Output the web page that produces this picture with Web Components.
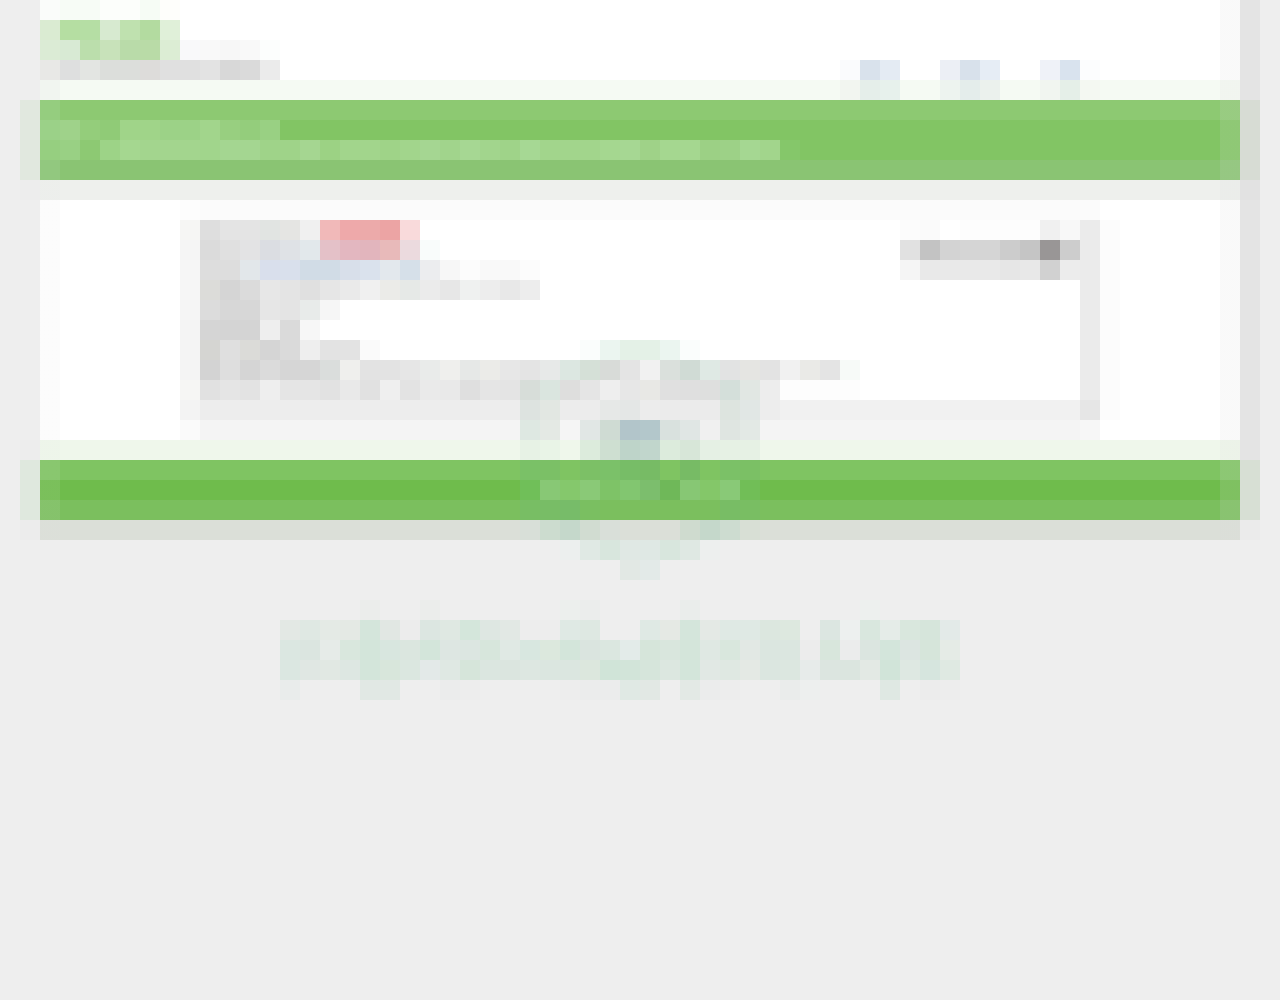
<!DOCTYPE html>
<html lang="en">
<head>
<meta charset="UTF-8">
<meta name="viewport" content="width=device-width, initial-scale=1.0">
<title>Mosaic page</title>
<style>
    body {
        margin: 0;
        background: #eeeeee;
        font-family: "Liberation Sans", sans-serif;
    }
</style>
</head>
<body>
<mosaic-page></mosaic-page>

<script>
/**
 * Draws a small grid of square tiles.
 * Rows are split by "|", tiles by spaces, "." is an empty tile, "3*aabbcc" repeats.
 */
class TileArt extends HTMLElement {
    constructor() {
        super();
        this.attachShadow({ mode: 'open' });
    }

    connectedCallback() {
        const rows = this.getAttribute('tiles').split('|').map((row) => {
            return row.trim().split(/\s+/).flatMap((tile) => {
                const [count, color] = tile.includes('*') ? tile.split('*') : [1, tile];
                return Array(Number(count)).fill(color);
            });
        });
        const cols = Number(this.getAttribute('cols')) || Math.max(...rows.map((r) => r.length));
        let rects = '';
        rows.forEach((row, y) => row.forEach((color, x) => {
            if (color && color !== '.') {
                rects += `<rect x="${x}" y="${y}" width="1" height="1" fill="#${color}" />`;
            }
        }));

        this.shadowRoot.innerHTML = `
        <style>
            :host { display: block; flex: none; }
            svg { display: block; shape-rendering: crispEdges; }
        </style>
        <svg width="${cols * 20}" height="${rows.length * 20}" viewBox="0 0 ${cols} ${rows.length}" aria-hidden="true">${rects}</svg>
        `;
    }
}

/**
 * Full-width band with a soft edge on both sides.
 */
class PageBand extends HTMLElement {
    constructor() {
        super();
        this.attachShadow({ mode: 'open' });
        this.shadowRoot.innerHTML = `
        <style>
            :host {
                display: grid;
                grid-template-columns: 20px minmax(0, 1fr) 20px;
                min-height: 20px;
            }
            .left { background: var(--left, #eeeeee); }
            .body {
                background:
                    linear-gradient(rgba(225, 225, 225, 0.1), rgba(225, 225, 225, 0.1)) left / 20px 100% no-repeat,
                    linear-gradient(rgba(218, 218, 218, 0.15), rgba(218, 218, 218, 0.15)) right / 20px 100% no-repeat,
                    var(--fill, linear-gradient(#ffffff, #ffffff));
            }
            .right { background: var(--right, #e4e4e4); }
        </style>
        <div class="left"></div>
        <div class="body"><slot></slot></div>
        <div class="right"></div>
        `;
    }
}

class SiteHeader extends HTMLElement {
    constructor() {
        super();
        this.attachShadow({ mode: 'open' });
        this.shadowRoot.innerHTML = `
        <style>
            :host { display: block; }
            page-band { --fill: linear-gradient(#ffffff 80px, #f5faf3 80px); }
            .row {
                display: flex;
                justify-content: space-between;
                align-items: flex-end;
                padding-right: 140px;
            }
            nav { display: flex; gap: 40px; }
            a { display: block; }
        </style>
        <page-band>
            <header class="row">
                <tile-art tiles="fafcfa 2*f7fcf6 2*fcfefb f6fcf5 fefefb |
                    daebd2 b5dea2 b5dea4 d7ead0 bfe1af b3dba0 e0f0d9 |
                    dbebd5 d8ead4 bbdeac c8e2ba b9dba9 b9dba7 dcedd4 f9f9fa f9f9f9 f7f7f7 f9f9f9 fcfefd |
                    e8e8e6 dedfdf e3e5e2 2*dcdedb dddcda 2*e0e0e0 e3e3e3 d8d8d8 dadada ebebeb |
                    f1f5f0"></tile-art>
                <nav>
                    <a href="#first" aria-label="First"><tile-art tiles="fafbfd d9e2ec e4ebf3 | f2f5f0 e5eeea e7f1ec"></tile-art></a>
                    <a href="#second" aria-label="Second"><tile-art tiles="eceff5 d8e1eb e6edf5 | edf3ef e4edeb ebf1ed"></tile-art></a>
                    <a href="#third" aria-label="Third"><tile-art tiles="eff2f8 d9e3ee fcfdfe | f1f5f0 e5efe8 f4f8f2"></tile-art></a>
                </nav>
            </header>
        </page-band>
        `;
    }
}

class TitleBanner extends HTMLElement {
    constructor() {
        super();
        this.attachShadow({ mode: 'open' });
        this.shadowRoot.innerHTML = `
        <style>
            :host { display: block; }
            .banner {
                --left: #e1e8df;
                --right: #d7dcd4;
                --fill: linear-gradient(#8dc972 20px, #82c564 20px 60px, #8ac473 60px);
            }
            .rule { --left: #ededed; --right: #e2e2e2; --fill: linear-gradient(#eef0ed, #eef0ed); }
        </style>
        <page-band class="banner">
            <tile-art tiles="95cd7f |
                9bd188 9fd28a 94cd7b 90cb77 2*a0d489 2*9cd287 a2d58c 98cf80 94cd7c 99d083 |
                96cf80 99d084 8dc973 9dd387 a5d790 3*a3d58e a1d58c 2*a4d691 2*9fd389 a5d691 9cd284 2*a2d58c 9fd388
                a2d58c a5d692 a1d48c a6d793 a2d58d 9fd389 a6d894 3*a2d58c a5d790 a6d793 9fd288 2*a5d790 9cd085 9dd187 a5d792 a2d58c 85c76a |
                92c87f"></tile-art>
        </page-band>
        <page-band class="rule"></page-band>
        `;
    }
}

class ContentCard extends HTMLElement {
    constructor() {
        super();
        this.attachShadow({ mode: 'open' });
        this.shadowRoot.innerHTML = `
        <style>
            :host { display: block; }
            .card { margin: 0 140px; }
            .top, .low, .foot { height: 20px; }
            .top { background: linear-gradient(90deg, #fdfdfd 20px, #fbfbfb 20px); }
            .main {
                display: flex;
                justify-content: space-between;
                align-items: flex-start;
                border-right: 20px solid #ebebeb;
            }
            .main, .low { box-shadow: 20px 0 #fcfcfc; }
            .low { background: linear-gradient(90deg, #f3f3f3 20px, #ededed 20px 600px, #f1f1f1 600px); border-right: 20px solid #e6e6e6; }
            .foot { background: linear-gradient(90deg, #fafafa 20px, #f4f4f4 20px); border-right: 20px solid #f7f7f7; }
            button {
                padding: 0;
                border: 0;
                background: none;
                cursor: pointer;
            }
        </style>
        <page-band>
            <section class="card">
                <div class="top"></div>
                <div class="main">
                    <tile-art tiles="f6f6f4 dedede 2*e4e4e4 e1e4e2 e5e5e3 f0f0f0 f1b9b9 eea9aa ecaaaa eca4a4 f9dadb |
                        f5f5f5 dbdbdb e0e0e0 e3e3e4 dbdde2 dfe2e6 e2e8eb e4c1c8 e3b7c0 e2b5bd e8baba ebdade f9fcfb |
                        f6f6f6 2*dddddd e2e7ea d9dfec d9e0ec 2*d1dce6 d8dfea dae2ed e3e8ed d6e0e9 ecedef f7f7f7 fcfcfc 2*f9f9f9 fcfcfc |
                        f6f6f6 dcdcd9 d5d5d5 dbdbdb e7e7e7 e4e4e4 e0e0e0 e6e6e6 eaeaea f0f0f0 ebebe8 e6e9e7 ebebeb e7e7e7 eff1f0 ededed e8e8e8 ededed |
                        f5f5f5 dcdcdc 2*d7d7d7 e6e6e6 e4e4e4 e8ebea f6f6f6 |
                        f4f4f4 d5d5d5 2*d4d4d4 eeeeee dadada f7f7f7 |
                        f4f4f4 d5d5d2 dfdfdf dbdbd8 d5d5d5 dadada eeeeee 2*e3e3e3 fafafa |
                        f4f4f4 d3d3d3 dedede d5d5d5 dbdbdb 2*d6d6d6 dadddc efefed 2*e3e3e3 e6e6e6 e9ebea efefed e6e8e7 ebebe8 e7e7e7
                        12*e4e4e4 e3e3e3 f1f1f1 eaeae7 e4e4e4 f7faf8 |
                        f6f6f4 e1e1e1 e5e5e5 e3e3e3 eeeeee 2*e5e5e5 e2e2e2 e9e9e9 e1e1e1 efefef e3e3e3 eaeaea e9e9e9 dfdfdf e5e5e5 e4e4e4
                        12*e4e4e4 ededed 4*fdfdfd"></tile-art>
                    <button type="button" aria-label="Options"><tile-art tiles="fcfcfc fafafa . 4*fdfdfd f0f0f0 f8f8f8 |
                        e1e1e1 c3c3c3 d3d3d3 2*d5d5d5 cccccc c5c5c5 999696 cdcdcd |
                        f5f5f5 4*e9e9e9 e6e6e6 e8e8e8 d1d1d1 ececec"></tile-art></button>
                </div>
                <div class="low"></div>
                <div class="foot"></div>
            </section>
        </page-band>
        `;
    }
}

class SiteFooter extends HTMLElement {
    constructor() {
        super();
        this.attachShadow({ mode: 'open' });
        this.shadowRoot.innerHTML = `
        <style>
            :host { display: block; }
            .tint { --left: #ededed; --fill: linear-gradient(#eff7eb, #eff7eb); }
            .bar {
                --left: #dfe8de;
                --right: #d7dfd4;
                --fill: linear-gradient(#7fc462 20px, #6fbc4c 20px 40px, #7bbf5e 40px);
            }
            .bar div { height: 60px; }
            .shade { --left: #ececec; --right: #ebebeb; --fill: linear-gradient(#dbdfd8, #dbdfd8); }
        </style>
        <page-band class="tint"></page-band>
        <page-band class="bar"><div></div></page-band>
        <page-band class="shade"></page-band>
        `;
    }
}

/* Seal and caption that lie over the card and the footer */
class SealMark extends HTMLElement {
    constructor() {
        super();
        this.attachShadow({ mode: 'open' });
        this.shadowRoot.innerHTML = `
        <style>
            :host {
                display: flex;
                flex-direction: column;
                align-items: center;
                gap: 20px;
                pointer-events: none;
            }
        </style>
        <tile-art cols="12" tiles="3*. fafdfc ebf5f0 2*e4f1e7 ebf5f0 fafdfc |
            e4e4e4 e7e9e8 dce7e1 d5e0d7 d8dbd8 e4e4e4 f1f1f1 dae0dc d0dbd5 dfe9e4 e2e3e3 e5e5e2 |
            d7ddd9 dae5df dededd e5e5e5 eeeeee e7e7e7 e8e8e5 e0e0e0 dfdfdf dedfde d4dfda e1e7e3 |
            dde3e0 e2e7e2 2*ececec e6e8e7 e4e7e6 ececec 3*ebebeb dde4df e1e7e5 |
            dee8e2 e4e9e4 f5f5f5 e1e7e5 cfdbd3 b2c5ca b3c7cb d9e1de e0e6e4 f0f0f0 dfe5e1 e3e9e5 |
            e7f2e5 e9f4e7 . dcebdc cedfd1 bed4c9 c1d6cc dcebdc d7e6d8 e5f0e4 2*e6f1e4 |
            7ac167 7bc066 . 7cc066 7bc169 77bd67 77bb65 . 77bb65 . 7bc167 7bc065 |
            70bf59 88c875 85c86c 8ac977 7ec367 82c670 7cbe6d 6fb859 87c774 84c769 89c977 71be57 |
            78be64 78bd66 77bc69 7abf61 6*. 78bd65 79be63 |
            d8dfd8 ccdccf c5d8cb d1dcd1 d9dfd9 3*. cfdbcf c5d8cb cddcd0 d8dfd5 |
            2*. ecefee e0e9e4 d8e6dd e0e8e4 dfe8e4 d8e6dd dfe8e3 edefee |
            5*. e2e8e4 e3eae8"></tile-art>
        <tile-art cols="36" tiles="4*. ebedeb 2*. ebedeb 6*. ecefed ebedec 4*. eaedeb 8*. edf0ee |
            e3e8e4 dfe8e3 e4eae5 e4e9e4 d4e5db e1e7e3 ececec dce6e1 dfe8e2 d4e6db dee7e2 e2e8e4 2*ededed dfe9e4 dee8e2 2*.
            dfe9e4 e5e9e4 d4e5db e4e9e5 2*dfe9e4 dce7df dde8df . dce6e1 edf0ef d9e7de e5ece8 d9e7dd d6e5db e3eae8 |
            dbe7e1 dbe5e0 e6ebe8 d9e7dd d3e5da d8e6df dbe6df d3e5da dde6e2 dce6e1 d7e6dc e0e9e4 d8e7e0 dce8dd d3e5da dae4df dbe7e0 e3ebe9
            d6e5da d9e6dd d4e5da dfe8e3 d9e7dd e2e8e4 2*dbe6e0 ececec d8e6dc ebecec dbe5e0 d3e5db dce5e1 d6e5da e5ebe6 |
            dbe7e1 e0e7e3 e1e8e3 dde7e2 d3e5da d8e6db dbe7e0 e3e9e8 dfe8e3 d6e5da dbe6e0 dbe5df dde7e1 2*dbe6e0 dce7dd d0e4d8 d2e4d9
            d6e5db dce7e0 d3e5da e1e8e4 dfe8e2 e4e9e4 dbe6e0 dce7e0 e7ebea dce5e0 dbe5df e3e9e4 d1e4d9 dee8e2 d6e5de dfe9e2 |
            e9eceb 3*. 2*e1e8e4 2*. ebecec ededed 4*. ededed 2*ebecec e0e9e4 e2e8e4 . e3e9e5 ebecec ededed 2*. eaeceb edefee
            3*. dfe8e3 . ececec ededed"></tile-art>
        `;
    }
}

class MosaicPage extends HTMLElement {
    constructor() {
        super();
        this.attachShadow({ mode: 'open' });
        this.shadowRoot.innerHTML = `
        <style>
            :host { display: block; position: relative; min-height: 100vh; }
            main { margin: 0 20px; }
            seal-mark { position: absolute; top: 340px; left: 0; right: 0; }
        </style>
        <main>
            <site-header></site-header>
            <title-banner></title-banner>
            <content-card></content-card>
            <site-footer></site-footer>
        </main>
        <seal-mark></seal-mark>
        `;
    }
}

customElements.define('tile-art', TileArt);
customElements.define('page-band', PageBand);
customElements.define('site-header', SiteHeader);
customElements.define('title-banner', TitleBanner);
customElements.define('content-card', ContentCard);
customElements.define('site-footer', SiteFooter);
customElements.define('seal-mark', SealMark);
customElements.define('mosaic-page', MosaicPage);
</script>
</body>
</html>
